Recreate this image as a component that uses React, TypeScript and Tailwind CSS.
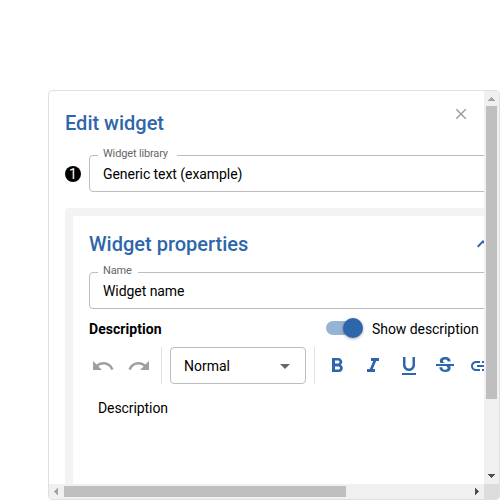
import type { ReactNode } from "react";
import {
  MdArrowDropDown,
  MdClose,
  MdFormatBold,
  MdFormatItalic,
  MdFormatUnderlined,
  MdKeyboardArrowUp,
  MdLink,
  MdRedo,
  MdStrikethroughS,
  MdUndo,
} from "react-icons/md";

function Field({ label, value, legendClass }: { label: string; value: string; legendClass: string }) {
  return (
    <fieldset className="h-[44px] min-w-0 flex-1 rounded border border-[#bdbdbd]">
      <legend className={`ml-[8px] h-[14px] pl-[5px] text-[11px] leading-[12px] tracking-[-0.15px] whitespace-nowrap text-[#666] ${legendClass}`}>
        {label}
      </legend>
      <div className="pt-[2px] pl-[13px] text-[14px] leading-[20px] tracking-[-0.06px]">{value}</div>
    </fieldset>
  );
}

function Tool({ children, label }: { children: ReactNode; label: string }) {
  return (
    <button aria-label={label} className="flex h-[28px] w-[36px] shrink-0 items-center justify-center">
      {children}
    </button>
  );
}

function Arrow({ points, fill }: { points: string; fill: string }) {
  return (
    <svg width="15" height="15" viewBox="0 0 15 15" className="block shrink-0" shapeRendering="crispEdges">
      <polygon points={points} fill={fill} />
    </svg>
  );
}

export default function App() {
  return (
    <div className="h-[500px] w-[500px] overflow-hidden bg-white pt-[90px] pl-[48px] font-['Roboto',sans-serif] text-black">
      <div className="grid h-[410px] w-[452px] grid-cols-[435px_15px] grid-rows-[393px_15px] overflow-hidden rounded border border-[#e0e0e0]">
        <div className="overflow-hidden">
          <div className="w-[625px] px-[16px]">
            <header className="flex h-[57px] items-start">
              <h1 className="w-[387px] pt-[18px] text-[20px] leading-[28px] font-medium text-[#2e66ab]">Edit widget</h1>
              <button aria-label="Close" className="pt-[14px] text-[#9e9e9e]">
                <MdClose size={18} />
              </button>
            </header>

            <div className="flex h-[44px] gap-[8px]">
              <span className="mt-[18px] flex h-[16px] w-[16px] shrink-0 items-center justify-center rounded-full bg-black text-[14px] leading-[16px] text-white">
                1
              </span>
              <Field label="Widget library" value="Generic text (example)" legendClass="w-[79px]" />
            </div>

            <section className="mt-[16px] h-[420px] rounded border-[8px] border-[#f3f3f3] px-[16px]">
              <div className="flex h-[49px] items-start">
                <h2 className="w-[382px] pt-[14px] text-[20px] leading-[28px] font-medium text-[#2e66ab]">Widget properties</h2>
                <MdKeyboardArrowUp size={24} className="mt-[16px] shrink-0 text-[#2e66ab]" />
              </div>
              <div className="flex">
                <Field label="Name" value="Widget name" legendClass="w-[40px]" />
              </div>

              <div className="mt-[9px] flex h-[22px] items-center text-[14px]">
                <span className="w-[237px] font-bold tracking-[0.05px]">Description</span>
                <span className="mb-[2px] flex h-[14px] w-[34px] items-center justify-end rounded-full bg-[#96b2d5]">
                  <span className="-mr-[3px] h-[20px] w-[20px] shrink-0 rounded-full bg-[#2e66ab] shadow-[0_1px_3px_rgba(0,0,0,0.35)]" />
                </span>
                <span className="ml-[12px] tracking-[-0.06px]">Show description</span>
              </div>

              <div className="mt-[7px] flex h-[37px] items-center">
                <div className="-ml-[4px] flex w-[76px] text-[#9e9e9e]">
                  <Tool label="Undo"><MdUndo size={24} /></Tool>
                  <Tool label="Redo"><MdRedo size={24} /></Tool>
                </div>
                <div className="h-full w-px bg-[#e0e0e0]" />
                <div className="mx-[8px] flex h-full w-[136px] items-center justify-between rounded border border-[#bdbdbd] pr-[8px] pl-[13px] text-[14px]">
                  <span className="pt-px leading-[20px]">Normal</span>
                  <MdArrowDropDown size={24} className="text-[#666]" />
                </div>
                <div className="h-full w-px bg-[#e0e0e0]" />
                <div className="ml-[4px] flex text-[#2e66ab]">
                  <Tool label="Bold"><MdFormatBold size={24} /></Tool>
                  <Tool label="Italic"><MdFormatItalic size={24} /></Tool>
                  <Tool label="Underline"><MdFormatUnderlined size={24} /></Tool>
                  <Tool label="Strikethrough"><MdStrikethroughS size={24} /></Tool>
                  <Tool label="Link"><MdLink size={24} /></Tool>
                </div>
              </div>
              <p className="mt-[14px] pl-[9px] text-[14px] leading-[20px] tracking-[-0.08px]">Description</p>
            </section>
          </div>
        </div>

        <div className="flex flex-col bg-[#f0f0f0]">
          <Arrow points="4,10 11,10 8,6 7,6" fill="#a3a3a3" />
          <div className="ml-[2px] h-[293px] w-[11px] bg-[#bfbfbf]" />
          <div className="flex-1" />
          <Arrow points="4,5 11,5 8,9 7,9" fill="#505050" />
        </div>
        <div className="flex bg-[#f0f0f0]">
          <Arrow points="9,4 9,11 5,8 5,7" fill="#a3a3a3" />
          <div className="mt-[2px] h-[11px] w-[282px] bg-[#bfbfbf]" />
          <div className="flex-1" />
          <Arrow points="6,4 6,11 10,8 10,7" fill="#505050" />
        </div>
        <div className="bg-[#dcdcdc]" />
      </div>
    </div>
  );
}
